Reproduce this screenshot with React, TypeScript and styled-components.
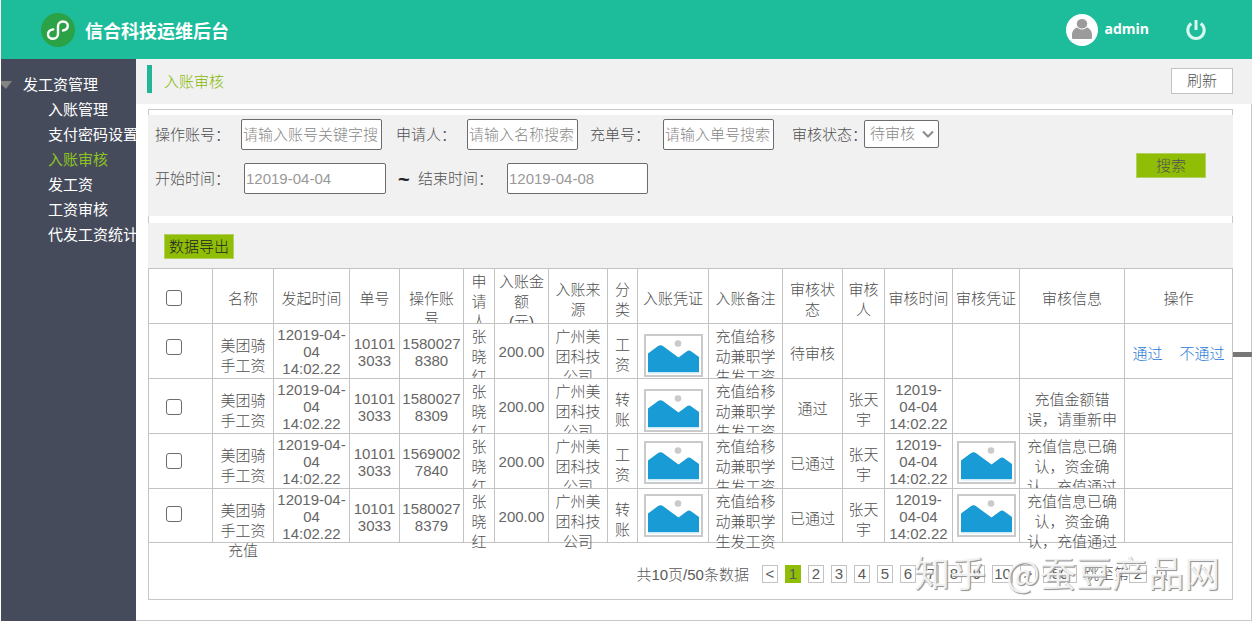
import React from "react";
import styled, { createGlobalStyle } from "styled-components";

const GlobalStyle = createGlobalStyle`
  *, *::before, *::after { box-sizing: border-box; }
  body {
    margin: 0;
    background: #fff;
    color: #505050;
    font-family: "Liberation Sans", "Noto Sans CJK SC", sans-serif;
    font-size: 15px;
    font-weight: 300;
    line-height: 20px;
  }
  input, select, button { font: inherit; color: inherit; margin: 0; }
`;

const Page = styled.div`
  position: relative;
  padding-left: 1px;
`;

const TopBar = styled.header`
  display: flex;
  align-items: center;
  height: 59px;
  padding: 0 45px 0 39px;
  background: #1dbd9c;
  color: #fff;
`;

const Brand = styled.h1`
  flex: 1;
  margin: 4px 0 0 9px;
  font-size: 18px;
  font-weight: 700;
  line-height: 24px;
`;

const UserName = styled.span`
  margin: 0 36px 2px 6px;
  font-family: "Open Sans", "Noto Sans", sans-serif;
  font-size: 14px;
  font-weight: 700;
`;

const PowerButton = styled.button`
  display: flex;
  padding: 0;
  border: 0;
  background: none;
`;

const Body = styled.div`
  display: flex;
`;

const Sidebar = styled.nav`
  flex: none;
  width: 135px;
  padding-top: 13px;
  overflow: hidden;
  background: #464b5b;
  color: #fff;
  font-weight: 400;
  line-height: 25px;
  white-space: nowrap;
`;

const MenuGroup = styled.div`
  display: flex;
  align-items: center;
  gap: 11px;
`;

const MenuList = styled.ul`
  margin: 0;
  padding: 0 0 0 47px;
  list-style: none;
`;

const MenuLink = styled.a<{ $active?: boolean }>`
  color: ${(p) => (p.$active ? "#8cc31f" : "#fff")};
  text-decoration: none;
`;

const Main = styled.main`
  flex: 1;
  min-width: 0;
`;

const TitleBar = styled.div`
  display: flex;
  align-items: flex-start;
  justify-content: space-between;
  height: 45px;
  padding: 6px 19px 0 11px;
  background: #f1f1f1;
`;

const PageTitle = styled.h2`
  height: 28px;
  margin: 0;
  padding: 3px 0 0 12px;
  border-left: 5px solid #23b598;
  color: #86b800;
  font-size: 15px;
  font-weight: 300;
  line-height: 28px;
`;

const RefreshButton = styled.button`
  width: 62px;
  height: 26px;
  margin-top: 3px;
  padding: 0;
  border: 1px solid #c3c3c3;
  background: #fff;
`;

const Content = styled.div`
  position: relative;
  padding: 5px 18px 20px 12px;
  border: solid #c8c8c8;
  border-width: 0 1px 1px 0;
`;

const Panel = styled.section`
  padding-top: 5px;
  border: 1px solid #c8c8c8;
`;

const Filters = styled.form`
  display: flex;
  align-items: center;
  justify-content: space-between;
  height: 101px;
  margin: 0 -1px 7px;
  padding: 0 27px 0 7px;
  background: #f1f1f1;
`;

const FilterRows = styled.div`
  display: flex;
  flex-direction: column;
  gap: 13px;
  height: 93px;
`;

const FilterRow = styled.div`
  display: flex;
  align-items: center;
  height: 31px;
`;

const FieldLabel = styled.label<{ $w: number }>`
  flex: none;
  width: ${(p) => p.$w}px;
  white-space: nowrap;
`;

const TextField = styled.input<{ $w: number; $after?: number }>`
  width: ${(p) => p.$w}px;
  height: 31px;
  margin-right: ${(p) => p.$after ?? 0}px;
  padding: 0 3px 0 1px;
  border: 1px solid #6c6c6c;
  border-radius: 2px;
  background: #fff;
  color: #999;
  &::placeholder { color: #888; opacity: 1; }
`;

const Tilde = styled.span`
  width: 20px;
  color: #222;
  font-weight: 700;
  font-size: 20px;
`;

const SelectBox = styled.span`
  position: relative;
  display: flex;
  margin-bottom: 2px;
`;

const Select = styled.select`
  width: 75px;
  height: 28px;
  padding: 0 5px;
  appearance: none;
  border: 1px solid #6c6c6c;
  border-radius: 2px;
  background: #fff;
  color: #888;
`;

const Chevron = styled.svg`
  position: absolute;
  top: 10px;
  right: 5px;
  pointer-events: none;
`;

const GreenButton = styled.button<{ $dark?: boolean }>`
  flex: none;
  width: 70px;
  height: 25px;
  padding: 0;
  border: 1px solid #b4cf62;
  background: #90be06;
  color: ${(p) => (p.$dark ? "#222" : "#505050")};
`;

const Toolbar = styled.div`
  display: flex;
  height: 45px;
  margin: 0 -1px;
  padding: 11px 16px 0;
  background: #f1f1f1;
`;

const TableWrap = styled.div`
  margin: 0 -1px;
`;

const Table = styled.table`
  width: 100%;
  table-layout: fixed;
  border-collapse: collapse;
  text-align: center;
  th, td {
    padding: 0;
    border: 1px solid #c3c3c3;
    font-weight: 300;
    vertical-align: top;
  }
`;

const Cell = styled.div<{ $top?: number; $latin?: boolean; $last?: boolean }>`
  height: ${(p) => (p.$last ? 53 : 54)}px;
  padding-top: ${(p) => p.$top ?? 11}px;
  overflow: ${(p) => (p.$last ? "visible" : "hidden")};
  color: ${(p) => (p.$latin ? "#666" : "inherit")};
  line-height: ${(p) => (p.$latin ? 17 : 20)}px;
  white-space: pre;
`;

const CheckCell = styled(Cell)`
  display: flex;
  justify-content: flex-start;
  padding-left: 17px;
`;

const Check = styled.input`
  width: 16px;
  height: 16px;
  appearance: none;
  border: 1px solid #6c6c6c;
  border-radius: 3px;
  background: #fff;
  &:checked { background: #90be06; }
`;

const Thumb = styled.svg`
  display: block;
  margin: 0 auto;
`;

const Actions = styled(Cell)`
  display: flex;
  justify-content: center;
  gap: 17px;
`;

const ActionLink = styled.a`
  color: #1f78d8;
  text-decoration: none;
`;

const Pager = styled.nav`
  display: flex;
  align-items: center;
  justify-content: flex-end;
  gap: 7px;
  height: 56px;
  padding: 6px 63px 0 0;
  color: #5a5a5a;
`;

const Total = styled.span`
  margin: 2px 6px 0 0;
`;

const PageButton = styled.button<{ $active?: boolean; $wide?: boolean }>`
  width: ${(p) => (p.$wide ? 21 : 16)}px;
  height: 18px;
  padding: 0;
  border: 1px solid ${(p) => (p.$active ? "#90be06" : "#c3c3c3")};
  background: ${(p) => (p.$active ? "#90be06" : "#fff")};
  line-height: 16px;
`;

const PageField = styled.input<{ $w: number }>`
  width: ${(p) => p.$w}px;
  height: 18px;
  padding: 0;
  border: 1px solid #c3c3c3;
  background: #fff;
  text-align: center;
`;

const Jump = styled.label`
  display: flex;
  align-items: center;
`;

const SideHandle = styled.div`
  position: absolute;
  top: 248px;
  right: -1px;
  width: 19px;
  height: 5px;
  background: #777;
`;

const Watermark = styled.div`
  position: absolute;
  right: 32px;
  bottom: 28px;
  display: flex;
  gap: 20px;
  color: rgba(255, 255, 255, 0.85);
  font-family: "Noto Sans CJK SC", sans-serif;
  font-size: 36px;
  font-weight: 400;
  line-height: 44px;
  text-shadow: 1px 1px 1px #999, 1px 1px 0 #aaa;
  pointer-events: none;
`;

const menu = ["入账管理", "支付密码设置", "入账审核", "发工资", "工资审核", "代发工资统计"];

const columns: { w: number; label: string; top?: number }[] = [
  { w: 61, label: "名称" },
  { w: 76, label: "发起时间" },
  { w: 50, label: "单号" },
  { w: 64, label: "操作账\n号", top: 20 },
  { w: 31, label: "申\n请\n人" },
  { w: 54, label: "入账金\n额\n(元)" },
  { w: 59, label: "入账来\n源" },
  { w: 30, label: "分\n类" },
  { w: 71, label: "入账凭证" },
  { w: 74, label: "入账备注" },
  { w: 60, label: "审核状\n态" },
  { w: 42, label: "审核\n人" },
  { w: 68, label: "审核时间" },
  { w: 67, label: "审核凭证" },
  { w: 105, label: "审核信息" },
  { w: 108, label: "操作" },
];

// Text starts lower the fewer lines it has.
const topFor = (text: string) => [20, 11, 3][text.split("\n").length - 1];

interface Row {
  account: string;
  kind: string;
  status: string;
  reviewed: boolean;
  proof: boolean;
  info: string;
  infoTop: number;
  checkTop: number;
  thumbTop: number;
}

const confirmed = "充值信息已确\n认，资金确\n认，充值通过";

const rows: Row[] = [
  { account: "1580027\n8380", kind: "工\n资", status: "待审核", reviewed: false, proof: false, info: "", infoTop: 3, checkTop: 15, thumbTop: 10 },
  { account: "1580027\n8309", kind: "转\n账", status: "通过", reviewed: true, proof: false, info: "充值金额错\n误，请重新申", infoTop: 11, checkTop: 20, thumbTop: 10 },
  { account: "1569002\n7840", kind: "工\n资", status: "已通过", reviewed: true, proof: true, info: confirmed, infoTop: 3, checkTop: 19, thumbTop: 7 },
  { account: "1580027\n8379", kind: "转\n账", status: "已通过", reviewed: true, proof: true, info: confirmed, infoTop: 3, checkTop: 17, thumbTop: 5 },
];

function Picture() {
  return (
    <Thumb width="59" height="43" viewBox="0 0 59 43" role="img" aria-label="凭证">
      <rect x="1" y="1" width="57" height="41" fill="#fff" stroke="#cacaca" strokeWidth="2" />
      <path d="M4 39.500V19.500L16.500 11L35 24L45 16.500L55 23.500V39.500Z" fill="#cdeaf7" />
      <path d="M4 38V19.500L14.500 11.800Q16.500 10.600 18.500 11.800L34.500 23.500L43 17.200Q45 16 47 17.200L55 23V38Z" fill="#199bd5" />
      <circle cx="34" cy="9.500" r="3.300" fill="#cacaca" />
    </Thumb>
  );
}

function Logo() {
  return (
    <svg width="36" height="36" viewBox="0 0 36 36" aria-hidden="true">
      <circle cx="18" cy="18" r="17" fill="#2ba245" />
      <path
        d="M13.200 17.400C10 18 8 19.900 8 22.300C8 24.900 10.200 26.700 12.900 26.700C16 26.700 18 24.700 18 22V14.400C18 11.400 20.200 9.500 22.900 9.500C25.700 9.500 27.800 11.300 27.800 13.800C27.800 16.300 26 18 23 18.500"
        fill="none"
        stroke="#fff"
        strokeWidth="2.400"
        strokeLinecap="round"
      />
    </svg>
  );
}

function Avatar() {
  return (
    <svg width="32" height="32" viewBox="0 0 32 32" aria-hidden="true">
      <circle cx="16" cy="16" r="16" fill="#fff" />
      <path d="M6 24V21C6 17 8.500 14 11.500 13.500Q16 16.500 20.500 13.500C23.500 14 26 17 26 21V24Q26 25 25 25H7Q6 25 6 24Z" fill="#9b9b9b" />
      <ellipse cx="16" cy="9.800" rx="5.700" ry="5.300" fill="#9b9b9b" stroke="#fff" strokeWidth="1" />
    </svg>
  );
}

export default function App() {
  return (
    <>
      <GlobalStyle />
      <Page>
        <TopBar>
          <Logo />
          <Brand>信合科技运维后台</Brand>
          <Avatar />
          <UserName>admin</UserName>
          <PowerButton type="button" aria-label="退出">
            <svg width="22" height="22" viewBox="0 0 22 22" fill="none" stroke="#d8f8f0" strokeWidth="3">
              <path d="M6.300 4.500A8.200 8.200 0 1 0 15.700 4.500M11 1V11" />
            </svg>
          </PowerButton>
        </TopBar>
        <Body>
          <Sidebar>
            <MenuGroup>
              <svg width="11" height="8" viewBox="0 0 11 8" aria-hidden="true">
                <path d="M0 0H11L5 8L0 3Z" fill="#85857f" />
              </svg>
              发工资管理
            </MenuGroup>
            <MenuList>
              {menu.map((m) => (
                <li key={m}>
                  <MenuLink href="#" $active={m === "入账审核"}>{m}</MenuLink>
                </li>
              ))}
            </MenuList>
          </Sidebar>
          <Main>
            <TitleBar>
              <PageTitle>入账审核</PageTitle>
              <RefreshButton type="button">刷新</RefreshButton>
            </TitleBar>
            <Content>
              <Panel>
                <Filters onSubmit={(e) => e.preventDefault()}>
                  <FilterRows>
                    <FilterRow>
                      <FieldLabel $w={86} htmlFor="account">操作账号：</FieldLabel>
                      <TextField id="account" $w={141} $after={14} placeholder="请输入账号关键字搜索" />
                      <FieldLabel $w={71} htmlFor="applicant">申请人：</FieldLabel>
                      <TextField id="applicant" $w={111} $after={12} placeholder="请输入名称搜索" />
                      <FieldLabel $w={73} htmlFor="order">充单号：</FieldLabel>
                      <TextField id="order" $w={111} $after={18} placeholder="请输入单号搜索" />
                      <FieldLabel $w={72} htmlFor="status">审核状态：</FieldLabel>
                      <SelectBox>
                        <Select id="status" defaultValue="待审核">
                          <option>待审核</option>
                          <option>通过</option>
                          <option>已通过</option>
                        </Select>
                        <Chevron width="12" height="9" viewBox="0 0 12 9" fill="none" stroke="#8a8a8a" strokeWidth="2">
                          <path d="M1 1.500L6 6.500L11 1.500" />
                        </Chevron>
                      </SelectBox>
                    </FilterRow>
                    <FilterRow>
                      <FieldLabel $w={89} htmlFor="from">开始时间：</FieldLabel>
                      <TextField id="from" $w={142} $after={12} defaultValue="12019-04-04" />
                      <Tilde>~</Tilde>
                      <FieldLabel $w={89} htmlFor="to">结束时间：</FieldLabel>
                      <TextField id="to" $w={141} defaultValue="12019-04-08" />
                    </FilterRow>
                  </FilterRows>
                  <GreenButton type="submit">搜索</GreenButton>
                </Filters>
                <Toolbar>
                  <GreenButton type="button" $dark>数据导出</GreenButton>
                </Toolbar>
                <TableWrap>
                  <Table>
                    <colgroup>
                      <col style={{ width: 64 }} />
                      {columns.map((c) => (
                        <col key={c.label} style={{ width: c.w }} />
                      ))}
                    </colgroup>
                    <thead>
                      <tr>
                        <th>
                          <CheckCell $top={21}>
                            <Check type="checkbox" aria-label="全选" />
                          </CheckCell>
                        </th>
                        {columns.map((c) => (
                          <th key={c.label} scope="col">
                            <Cell $top={c.top ?? topFor(c.label)}>{c.label}</Cell>
                          </th>
                        ))}
                      </tr>
                    </thead>
                    <tbody>
                      {rows.map((r, i) => {
                        const last = i === rows.length - 1;
                        return (
                          <tr key={r.account}>
                            <td>
                              <CheckCell $top={r.checkTop} $last={last}>
                                <Check type="checkbox" aria-label={"选择 " + r.account} />
                              </CheckCell>
                            </td>
                            <td><Cell $top={12} $last={last}>{"美团骑\n手工资\n充值"}</Cell></td>
                            <td><Cell $top={2} $latin $last={last}>{"12019-04-\n04\n14:02.22"}</Cell></td>
                            <td><Cell $latin $last={last}>{"10101\n3033"}</Cell></td>
                            <td><Cell $latin $last={last}>{r.account}</Cell></td>
                            <td><Cell $top={3} $last={last}>{"张\n晓\n红"}</Cell></td>
                            <td><Cell $top={19} $latin $last={last}>200.00</Cell></td>
                            <td><Cell $top={3} $last={last}>{"广州美\n团科技\n公司"}</Cell></td>
                            <td><Cell $last={last}>{r.kind}</Cell></td>
                            <td><Cell $top={r.thumbTop} $last={last}><Picture /></Cell></td>
                            <td><Cell $top={3} $last={last}>{"充值给移\n动兼职学\n生发工资"}</Cell></td>
                            <td><Cell $top={20} $last={last}>{r.status}</Cell></td>
                            <td><Cell $last={last}>{r.reviewed && "张天\n宇"}</Cell></td>
                            <td><Cell $top={2} $latin $last={last}>{r.reviewed && "12019-\n04-04\n14:02.22"}</Cell></td>
                            <td><Cell $top={r.thumbTop} $last={last}>{r.proof && <Picture />}</Cell></td>
                            <td><Cell $top={r.infoTop} $last={last}>{r.info}</Cell></td>
                            <td>
                              <Actions $top={20} $last={last}>
                                {!r.reviewed && (
                                  <>
                                    <ActionLink href="#">通过</ActionLink>
                                    <ActionLink href="#">不通过</ActionLink>
                                  </>
                                )}
                              </Actions>
                            </td>
                          </tr>
                        );
                      })}
                    </tbody>
                  </Table>
                </TableWrap>
                <Pager aria-label="分页">
                  <Total>共10页/50条数据</Total>
                  <PageButton type="button">&lt;</PageButton>
                  {[1, 2, 3, 4, 5, 6, 7, 8, 9, 10].map((n) => (
                    <PageButton key={n} type="button" $active={n === 1} $wide={n === 10}>{n}</PageButton>
                  ))}
                  <PageButton type="button">&gt;</PageButton>
                  <PageField $w={34} aria-label="每页条数" defaultValue="50" />
                  <Jump>
                    跳至第
                    <PageField $w={18} defaultValue="2" />
                  </Jump>
                  页
                </Pager>
              </Panel>
              <SideHandle />
            </Content>
          </Main>
        </Body>
        <Watermark>
          <span>知乎</span>
          <span>@蚕豆产品网</span>
        </Watermark>
      </Page>
    </>
  );
}
